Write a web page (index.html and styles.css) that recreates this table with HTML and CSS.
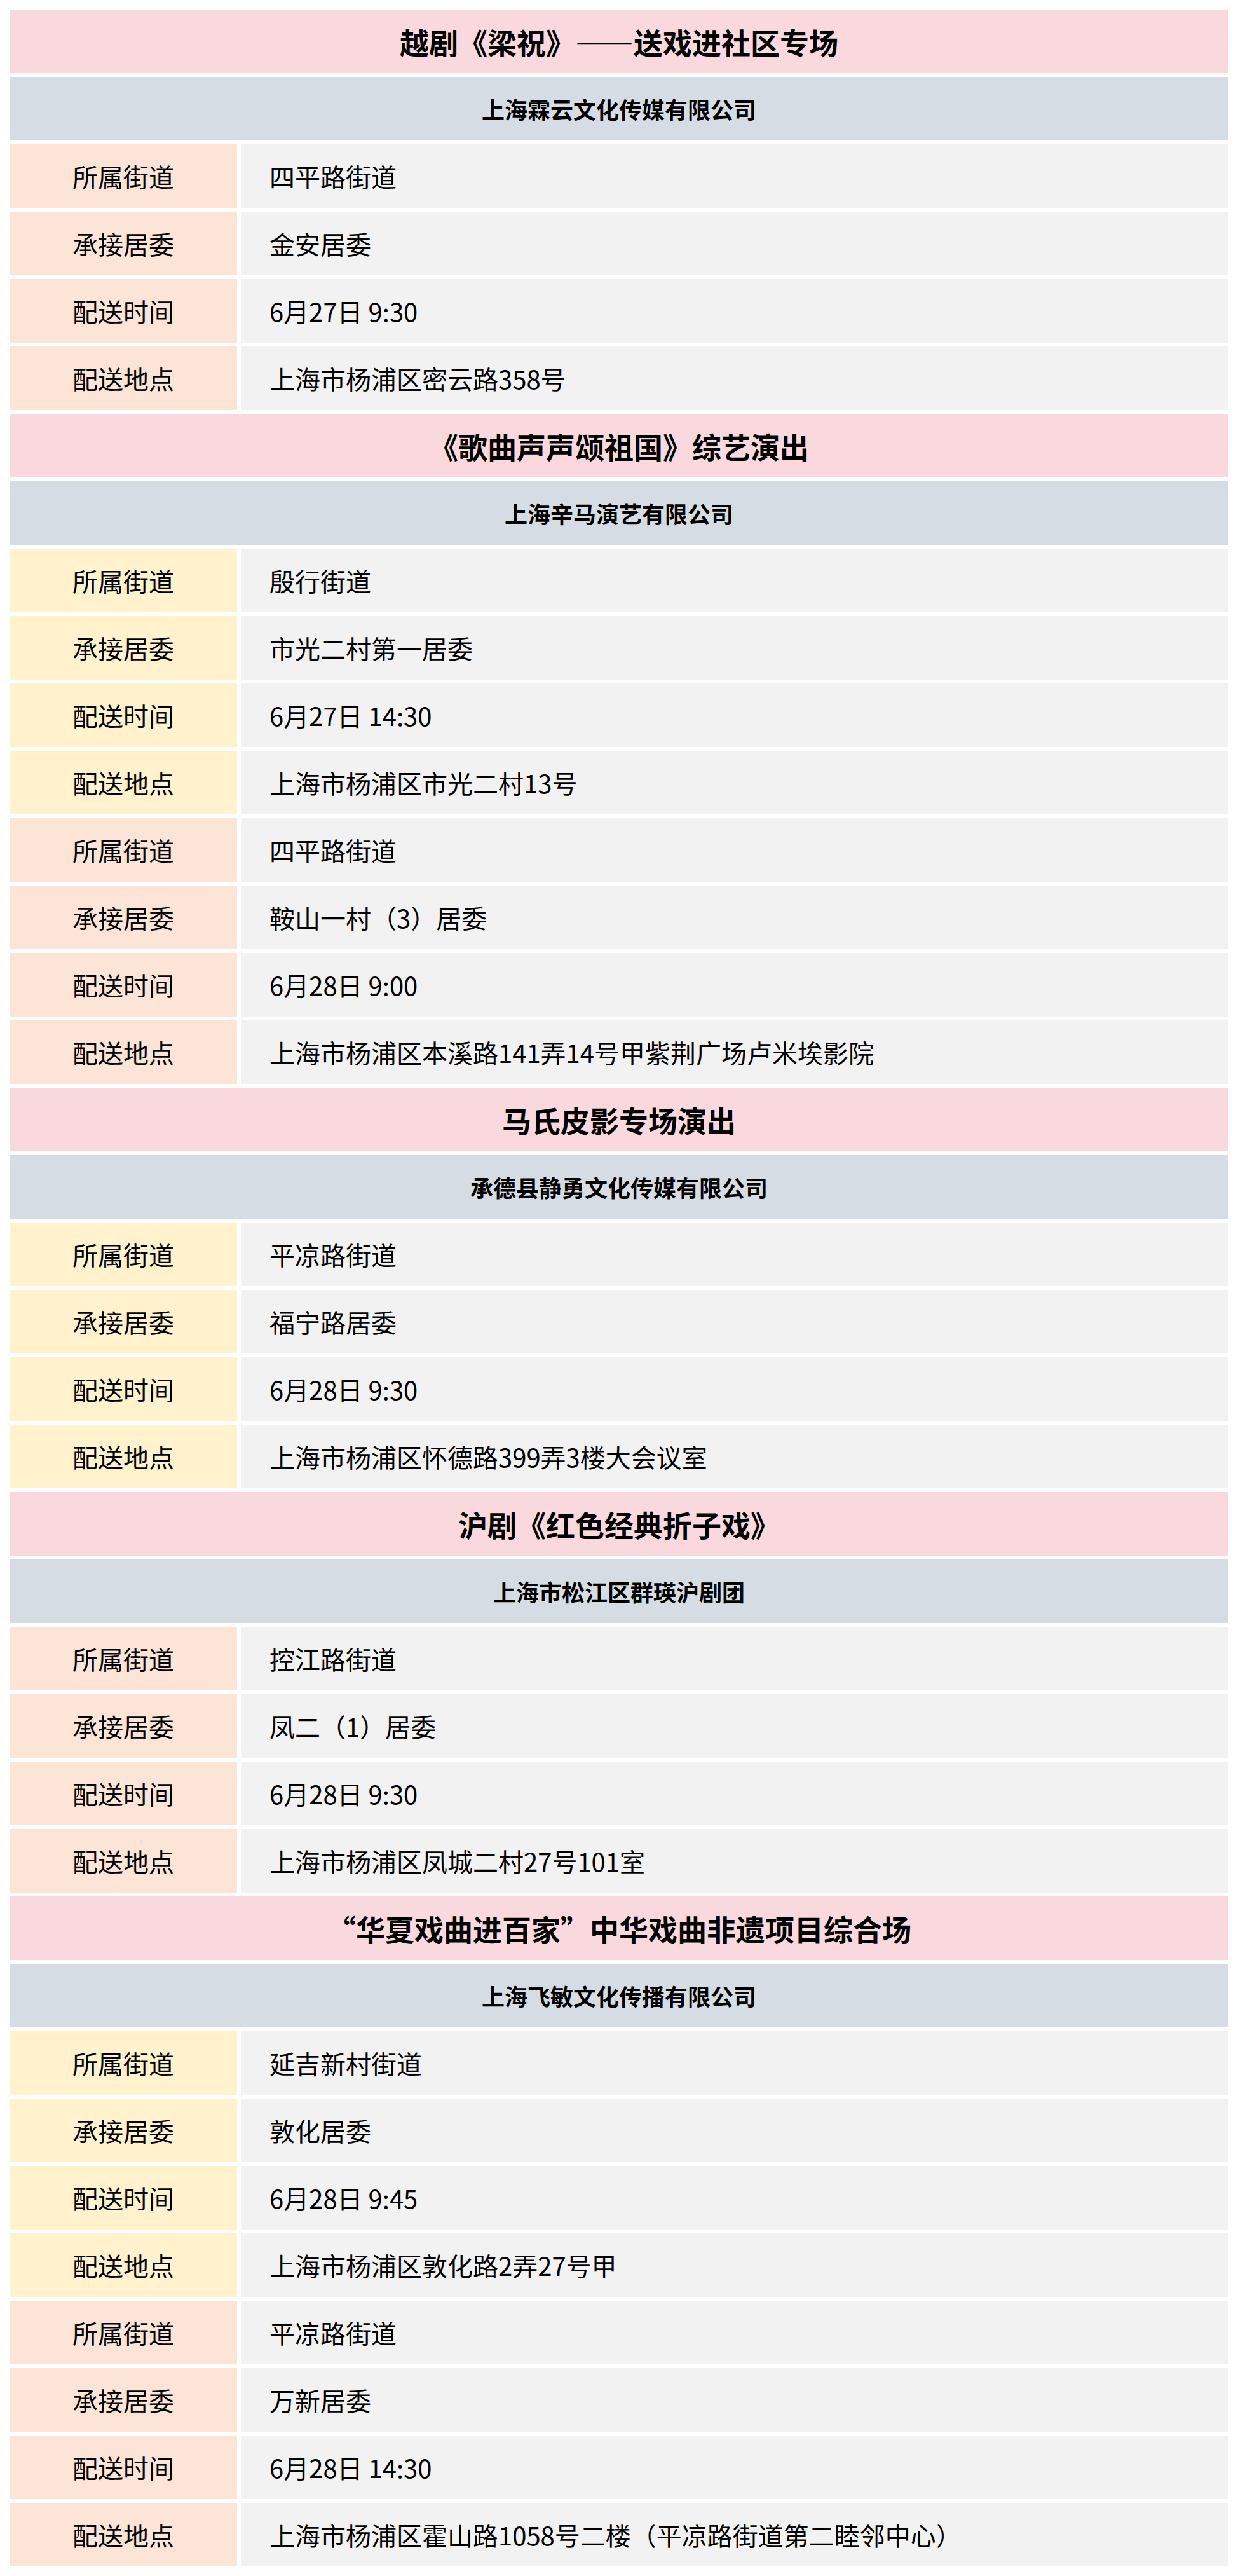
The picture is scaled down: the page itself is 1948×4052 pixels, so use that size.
FILE: index.html
```html
<!DOCTYPE html>
<html lang="zh-CN">
<head>
<meta charset="utf-8">
<title>送戏进社区</title>
<link rel="stylesheet" href="styles.css">
</head>
<body>
<div class="sheet">
  <div class="title">越剧《梁祝》——送戏进社区专场</div>
  <div class="company">上海霖云文化传媒有限公司</div>
  <div class="label peach">所属街道</div><div class="value">四平路街道</div>
  <div class="label peach">承接居委</div><div class="value">金安居委</div>
  <div class="label peach">配送时间</div><div class="value">6月27日 9:30</div>
  <div class="label peach">配送地点</div><div class="value">上海市杨浦区密云路358号</div>

  <div class="title">《歌曲声声颂祖国》综艺演出</div>
  <div class="company">上海辛马演艺有限公司</div>
  <div class="label yellow">所属街道</div><div class="value">殷行街道</div>
  <div class="label yellow">承接居委</div><div class="value">市光二村第一居委</div>
  <div class="label yellow">配送时间</div><div class="value">6月27日 14:30</div>
  <div class="label yellow">配送地点</div><div class="value">上海市杨浦区市光二村13号</div>
  <div class="label peach">所属街道</div><div class="value">四平路街道</div>
  <div class="label peach">承接居委</div><div class="value">鞍山一村（3）居委</div>
  <div class="label peach">配送时间</div><div class="value">6月28日 9:00</div>
  <div class="label peach">配送地点</div><div class="value">上海市杨浦区本溪路141弄14号甲紫荆广场卢米埃影院</div>

  <div class="title">马氏皮影专场演出</div>
  <div class="company">承德县静勇文化传媒有限公司</div>
  <div class="label yellow">所属街道</div><div class="value">平凉路街道</div>
  <div class="label yellow">承接居委</div><div class="value">福宁路居委</div>
  <div class="label yellow">配送时间</div><div class="value">6月28日 9:30</div>
  <div class="label yellow">配送地点</div><div class="value">上海市杨浦区怀德路399弄3楼大会议室</div>

  <div class="title">沪剧《红色经典折子戏》</div>
  <div class="company">上海市松江区群瑛沪剧团</div>
  <div class="label peach">所属街道</div><div class="value">控江路街道</div>
  <div class="label peach">承接居委</div><div class="value">凤二（1）居委</div>
  <div class="label peach">配送时间</div><div class="value">6月28日 9:30</div>
  <div class="label peach">配送地点</div><div class="value">上海市杨浦区凤城二村27号101室</div>

  <div class="title">“华夏戏曲进百家”中华戏曲非遗项目综合场</div>
  <div class="company">上海飞敏文化传播有限公司</div>
  <div class="label yellow">所属街道</div><div class="value">延吉新村街道</div>
  <div class="label yellow">承接居委</div><div class="value">敦化居委</div>
  <div class="label yellow">配送时间</div><div class="value">6月28日 9:45</div>
  <div class="label yellow">配送地点</div><div class="value">上海市杨浦区敦化路2弄27号甲</div>
  <div class="label peach">所属街道</div><div class="value">平凉路街道</div>
  <div class="label peach">承接居委</div><div class="value">万新居委</div>
  <div class="label peach">配送时间</div><div class="value">6月28日 14:30</div>
  <div class="label peach">配送地点</div><div class="value">上海市杨浦区霍山路1058号二楼（平凉路街道第二睦邻中心）</div>
</div>
</body>
</html>
```
FILE: styles.css
```css
html, body {
  margin: 0;
  padding: 0;
  background: #ffffff;
}
body {
  font-family: "Noto Sans CJK SC", "Microsoft YaHei", "Noto Sans", sans-serif;
  color: #000000;
}
.sheet {
  display: grid;
  grid-template-columns: 358px 1fr;
  grid-auto-rows: 100px;
  gap: 6px;
  padding: 15px;
}
.title,
.company,
.label,
.value {
  display: flex;
  align-items: center;
  white-space: nowrap;
}
.title {
  grid-column: 1 / -1;
  justify-content: center;
  background: #f9d9de;
  font-size: 46px;
  font-weight: 700;
}
.company {
  grid-column: 1 / -1;
  justify-content: center;
  background: #d6dce4;
  font-size: 36px;
  font-weight: 700;
}
.label {
  justify-content: center;
  font-size: 40px;
}
.peach {
  background: #fce4d6;
}
.yellow {
  background: #fff2cc;
}
.value {
  background: #f2f2f2;
  font-size: 40px;
  padding-left: 45px;
}
```
